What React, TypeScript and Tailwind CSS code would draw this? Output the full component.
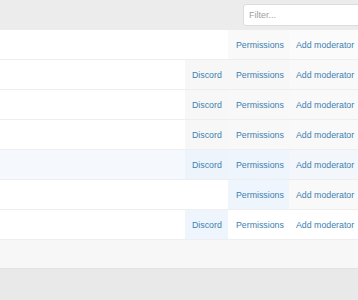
import React from "react";

type Row = {
  rowBg: string;
  discord: boolean;
  dBg: string;
  pBg: string;
  aBg: string;
};

const rows: Row[] = [
  { rowBg: "bg-white", discord: false, dBg: "bg-white", pBg: "bg-[#f9f9f9]", aBg: "bg-[#fbfbfb]" },
  { rowBg: "bg-white", discord: true, dBg: "bg-[#f7f7f7]", pBg: "bg-[#f7f7f7]", aBg: "bg-[#f9f9f9]" },
  { rowBg: "bg-white", discord: true, dBg: "bg-[#f7f7f7]", pBg: "bg-[#f8f8f8]", aBg: "bg-[#f9f9f9]" },
  { rowBg: "bg-white", discord: true, dBg: "bg-[#f7f7f7]", pBg: "bg-[#f8f8f8]", aBg: "bg-[#f9f9f9]" },
  { rowBg: "bg-[#f5f9fd]", discord: true, dBg: "bg-[#edf4fb]", pBg: "bg-[#eef5fc]", aBg: "bg-[#f3f7fb]" },
  { rowBg: "bg-white", discord: false, dBg: "bg-white", pBg: "bg-[#eef5fc]", aBg: "bg-[#f9f9f9]" },
  { rowBg: "bg-white", discord: true, dBg: "bg-[#eef5fc]", pBg: "bg-white", aBg: "bg-white" },
];

const link = "text-[#3d80b2] text-[8.8px] leading-none whitespace-nowrap";

export default function App() {
  return (
    <div
      className="w-[358px] h-[300px] overflow-hidden bg-[#e9e9e9] flex flex-col"
      style={{ fontFamily: '"Liberation Sans", Arial, sans-serif' }}
    >
      <div className="h-[30px] shrink-0 bg-[#ececec] flex items-start justify-end pt-[4px] pl-[243px]">
        <div className="h-[22px] flex-1 -mr-[10px] bg-white border border-[#dcdcdc] rounded-[3px] flex items-center pl-[5px]">
          <span className="text-[#a0a0a0] text-[9px] leading-none">Filter...</span>
        </div>
      </div>
      {rows.map((r, i) => (
        <div
          key={i}
          className={`h-[30px] shrink-0 flex border-b border-[#eeeeee] ${r.rowBg}`}
        >
          <div className="flex-1" />
          {r.discord ? (
            <div className={`w-[43px] flex items-center pl-[7px] pt-[2px] ${r.dBg}`}>
              <span className={link}>Discord</span>
            </div>
          ) : null}
          <div className={`w-[61px] flex items-center pl-[8px] pt-[2px] ${r.pBg}`}>
            <span className={link}>Permissions</span>
          </div>
          <div className={`w-[69px] flex items-center pl-[7px] pt-[2px] ${r.aBg}`}>
            <span className={link}>Add moderator</span>
          </div>
        </div>
      ))}
      <div className="h-[29px] shrink-0 bg-[#f7f7f7] border-b border-[#e2e2e2]" />
    </div>
  );
}
